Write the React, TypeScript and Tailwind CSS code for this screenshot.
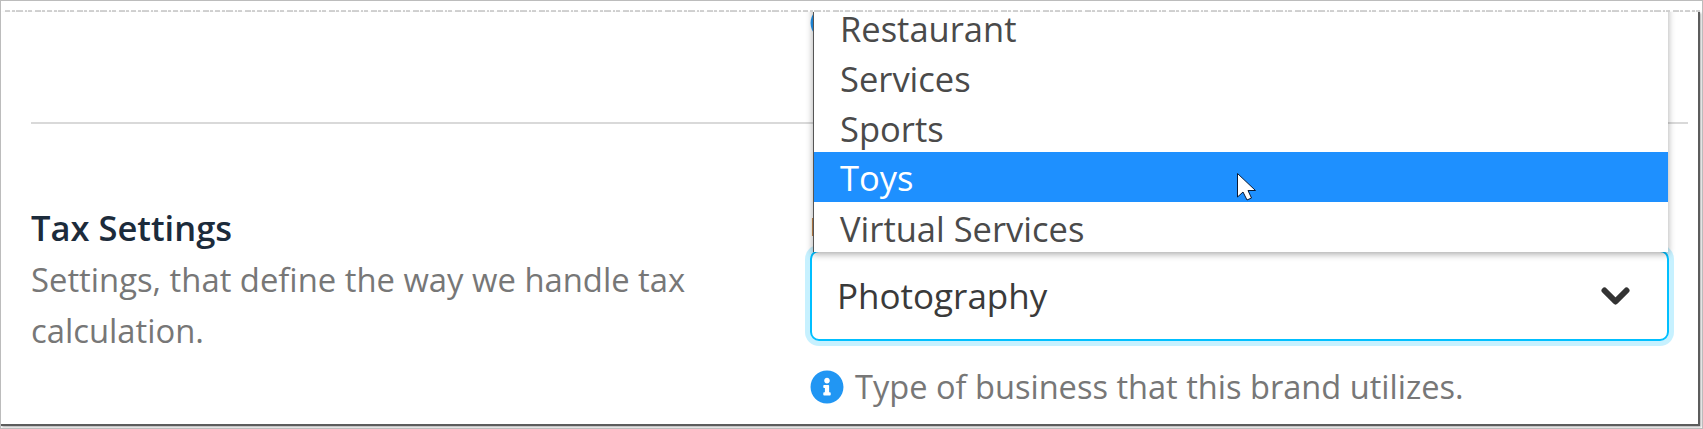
import { FaInfoCircle } from "react-icons/fa";

const font = "font-['Open_Sans',sans-serif]";
const options = ["Restaurant", "Services", "Sports", "Toys", "Virtual Services"];

function Helper() {
  return <FaInfoCircle className="size-[34px] shrink-0 text-[#2196f3]" />;
}

function Cursor() {
  return (
    <svg className="absolute left-[423px] top-[21px]" width="20" height="28" viewBox="0 0 20 28">
      <path d="M.5.5V24L6 19l4 8 4.500-2-3.500-7.500H18.500Z" fill="#fff" stroke="#0b1a33" strokeWidth="1" />
    </svg>
  );
}

export default function App() {
  return (
    <div className={`h-[429px] w-[1703px] overflow-hidden border border-[#bcbcbc] bg-white pr-[2px] pb-[3px] ${font}`}>
      <svg className="mt-[9px] block h-[2px] w-full" preserveAspectRatio="none">
        <line x1="4" y1="1" x2="1700" y2="1" stroke="#c4c4c4" strokeWidth="1.5" strokeDasharray="5 2 3 1 7 2 2 1 4 3 6 1 3 2" />
      </svg>

      <div className="relative h-[414px] overflow-hidden border-r-2 border-b-2 border-[#5c5c5c] shadow-[1px_1px_2px_#aaa]">
        <div className="flex h-[110px] items-start pl-[809px]">
          <div className="-mt-[6px]">
            <Helper />
          </div>
        </div>
        <div className="ml-[30px] mr-[10px] h-[2px] bg-[#d9d9d9]" />

        <div className="mt-[79px] flex pl-[30px]">
          <div className="w-[779px]">
            <h2 className="text-[34.500px] leading-[50px] font-semibold text-[#1c2b3b]">Tax Settings</h2>
            <p className="mt-[1px] w-[680px] text-[32.800px] leading-[51px] text-[#777]">Settings, that define the way we handle tax calculation.</p>
          </div>
          <div className="w-[859px]">
            <div className="h-[47px] text-[26px] leading-[47px] font-semibold text-[#333]">Business Type</div>
            <div className="flex h-[91px] items-center justify-between rounded-[9px] border-2 border-[#00bfff] pr-[37px] pl-[25px] text-[35px] text-[#3a3a3a] shadow-[0_0_0_5px_rgba(0,191,255,0.22)]">
              <span className="pt-[2px]">Photography</span>
              <svg width="29" height="18" viewBox="0 0 29 18" fill="none" stroke="#333" strokeWidth="6" strokeLinecap="round" strokeLinejoin="round">
                <polyline points="3.500,3.500 14.500,14.500 25.500,3.500" />
              </svg>
            </div>
            <div className="mt-[29px] flex items-center gap-[11px] text-[32.600px] leading-[34px] text-[#777]">
              <Helper />
              <span>Type of business that this brand utilizes.</span>
            </div>
          </div>
        </div>

        <ul className="absolute top-[-10px] left-[812px] w-[855px] border-l border-[#555] bg-white text-[34.500px] text-[#4a4a4a] shadow-[0_2px_7px_rgba(0,0,0,0.35)]">
          {options.map((o) =>
            o === "Toys" ? (
              <li key={o} className="relative flex h-[50px] items-center bg-[#1e90ff] pt-[2px] pl-[26px] text-white">
                {o}
                <Cursor />
              </li>
            ) : (
              <li key={o} className="flex h-[50px] items-center pt-[4px] pl-[26px]">
                {o}
              </li>
            ),
          )}
        </ul>
      </div>
    </div>
  );
}
